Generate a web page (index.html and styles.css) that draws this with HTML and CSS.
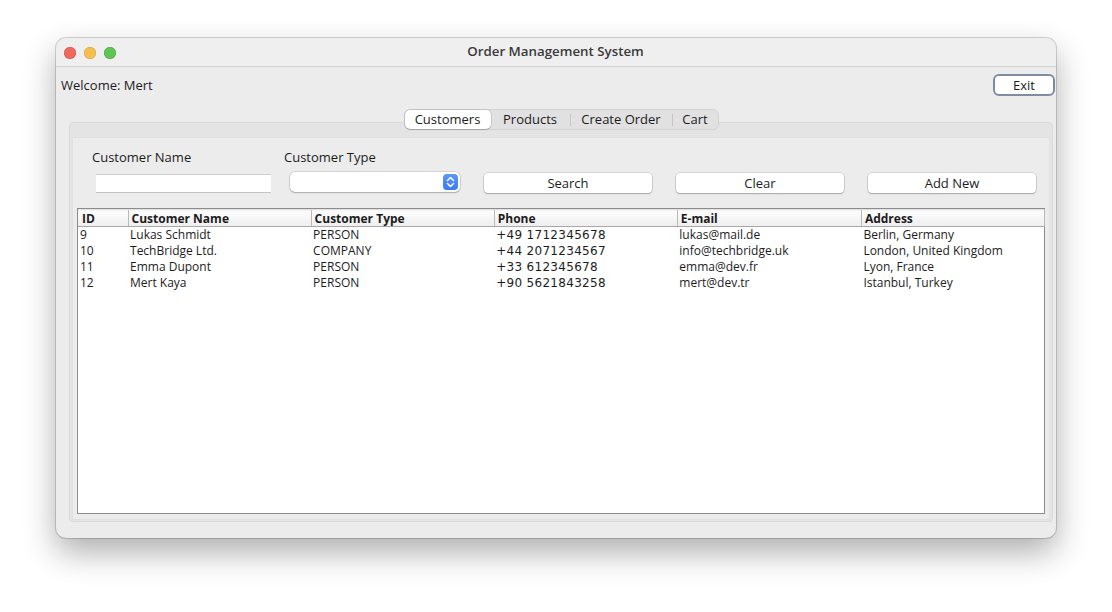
FILE: index.html
```html
<!DOCTYPE html>
<html>
<head>
<meta charset="utf-8">
<link rel="stylesheet" href="styles.css">
</head>
<body>
<div class="desktop">
  <div class="window">
    <div class="titlebar">
      <div class="lights">
        <span class="light red"></span>
        <span class="light yellow"></span>
        <span class="light green"></span>
      </div>
      <div class="title">Order Management System</div>
    </div>
    <div class="topbar">
      <span class="welcome">Welcome: Mert</span>
      <button class="exit">Exit</button>
    </div>
    <div class="tabs-area">
      <div class="tabs">
        <span class="tab active t1">Customers</span>
        <span class="tab t2">Products</span>
        <span class="sep"></span>
        <span class="tab t3">Create Order</span>
        <span class="sep"></span>
        <span class="tab t4">Cart</span>
      </div>
      <div class="panel">
        <div class="inner">
          <div class="form">
            <label class="lbl">Customer Name</label>
            <label class="lbl">Customer Type</label>
            <span></span><span></span><span></span>
            <div class="cell"><input class="field" type="text"></div>
            <div class="cell">
              <div class="combo">
                <span class="combo-btn">
                  <svg width="9" height="12" viewBox="0 0 9 12"><path d="M1.5 4.5 L4.5 1.5 L7.5 4.5 M1.5 7.5 L4.5 10.5 L7.5 7.5" fill="none" stroke="#fff" stroke-width="1.5" stroke-linecap="round" stroke-linejoin="round"/></svg>
                </span>
              </div>
            </div>
            <div class="cell"><button class="btn">Search</button></div>
            <div class="cell"><button class="btn">Clear</button></div>
            <div class="cell"><button class="btn">Add New</button></div>
          </div>
          <div class="table-wrap">
            <table class="grid">
              <colgroup>
                <col class="c-id"><col class="c-w"><col class="c-w"><col class="c-w"><col class="c-w1"><col class="c-w">
              </colgroup>
              <thead>
                <tr><th>ID</th><th>Customer Name</th><th>Customer Type</th><th>Phone</th><th>E-mail</th><th>Address</th></tr>
              </thead>
              <tbody>
                <tr><td>9</td><td>Lukas Schmidt</td><td>PERSON</td><td class="num">+49 1712345678</td><td>lukas@mail.de</td><td>Berlin, Germany</td></tr>
                <tr><td>10</td><td>TechBridge Ltd.</td><td>COMPANY</td><td class="num">+44 2071234567</td><td>info@techbridge.uk</td><td>London, United Kingdom</td></tr>
                <tr><td>11</td><td>Emma Dupont</td><td>PERSON</td><td class="num">+33 612345678</td><td>emma@dev.fr</td><td>Lyon, France</td></tr>
                <tr><td>12</td><td>Mert Kaya</td><td>PERSON</td><td class="num">+90 5621843258</td><td>mert@dev.tr</td><td>Istanbul, Turkey</td></tr>
              </tbody>
            </table>
          </div>
        </div>
      </div>
    </div>
  </div>
</div>
</body>
</html>
```

FILE: styles.css
```css
* { box-sizing: border-box; }
html, body {
  margin: 0;
  padding: 0;
  background: #ffffff;
  font-family: "Open Sans", "DejaVu Sans", sans-serif;
  color: #1c1c1c;
}
.desktop {
  padding: 38px 0 0 56px;
  width: 1112px;
  height: 612px;
}
.window {
  width: 1000px;
  height: 500px;
  background: #ececec;
  border-radius: 10px;
  overflow: hidden;
  box-shadow: 0 0 0 1px rgba(0,0,0,0.16), 0 14px 32px rgba(0,0,0,0.32);
  display: flex;
  flex-direction: column;
}
.titlebar {
  height: 29px;
  flex: none;
  background: #efefef;
  border-bottom: 1px solid #d2d2d2;
  display: flex;
  align-items: center;
  position: relative;
}
.lights {
  display: flex;
  gap: 8px;
  padding-left: 8px;
  padding-top: 1px;
}
.light {
  width: 12px;
  height: 12px;
  border-radius: 50%;
  display: block;
}
.red { background: #ee6a5f; box-shadow: inset 0 0 0 0.5px #d35146; }
.yellow { background: #f5be4f; box-shadow: inset 0 0 0 0.5px #d8a13b; }
.green { background: #5fc454; box-shadow: inset 0 0 0 0.5px #4aa83e; }
.title {
  position: absolute;
  left: 0;
  right: 0;
  top: 4px;
  text-align: center;
  font-size: 13.3px;
  font-weight: 600;
  color: #3a3a3a;
  line-height: 18px;
  padding-right: 1px;
}
.topbar {
  display: flex;
  justify-content: space-between;
  align-items: center;
  padding: 7px 1px 0 5px;
  height: 29px;
  flex: none;
}
.welcome {
  font-size: 13px;
  line-height: 18px;
}
.exit {
  width: 62px;
  height: 22px;
  font-family: inherit;
  font-size: 13px;
  line-height: 16px;
  background: #ffffff;
  border: 2px solid #7f8ca6;
  border-radius: 6px;
  padding: 0;
  color: #1c1c1c;
}
.tabs-area {
  padding: 13px 3px 0 13px;
  display: flex;
  flex-direction: column;
  align-items: center;
}
.tabs {
  position: relative;
  z-index: 1;
  display: flex;
  align-items: center;
  height: 21px;
  background: #e1e1e1;
  border: 1px solid #d3d3d3;
  border-radius: 6px;
  margin-bottom: -8px;
  padding: 0;
}
.tab {
  font-size: 13px;
  line-height: 19px;
  text-align: center;
  color: #1c1c1c;
}
.t1 { width: 86px; }
.t2 { width: 79px; }
.t3 { width: 101px; }
.t4 { width: 45px; }
.tab.active {
  background: #ffffff;
  border-radius: 5px;
  box-shadow: 0 0 0 0.5px rgba(0,0,0,0.18), 0 1px 1px rgba(0,0,0,0.15);
}
.sep {
  width: 1px;
  height: 12px;
  background: #c4c4c4;
}
.panel {
  width: 984px;
  border: 1px solid #d9d9d9;
  border-radius: 4px;
  background: #e4e4e4;
  padding: 14px 2px 1px 2px;
}
.inner {
  background: #ececec;
  border: 1px solid #e0e0e0;
  padding: 11px 3px 5px 4px;
}
.form {
  display: grid;
  grid-template-columns: repeat(5, 192px);
  grid-template-rows: 16px 21px;
  row-gap: 7px;
  padding-left: 15px;
}
.lbl {
  font-size: 13px;
  line-height: 16px;
  color: #1c1c1c;
}
.cell {
  display: flex;
  align-items: center;
}
.field {
  margin-left: 4px;
  margin-top: 1px;
  width: 175px;
  height: 19px;
  border: none;
  border-top: 1px solid #d0d0d0;
  border-bottom: 1px solid #c4c4c4;
  background: #ffffff;
  outline: none;
  padding: 0;
}
.combo {
  margin-left: 6px;
  margin-top: -1px;
  width: 170px;
  height: 20px;
  background: #ffffff;
  border-radius: 5px;
  box-shadow: 0 0 0 0.5px rgba(0,0,0,0.2), 0 1px 1.5px rgba(0,0,0,0.2);
  display: flex;
  justify-content: flex-end;
  align-items: center;
  padding-right: 2px;
}
.combo-btn {
  width: 15px;
  height: 16px;
  border-radius: 4px;
  background: linear-gradient(#5a98f8, #3a7bef);
  display: flex;
  align-items: center;
  justify-content: center;
}
.combo-btn svg { display: block; }
.btn {
  margin-left: 8px;
  margin-top: 1px;
  width: 168px;
  height: 20px;
  background: #ffffff;
  border: none;
  border-radius: 4px;
  box-shadow: 0 0 0 0.5px rgba(0,0,0,0.2), 0 1px 1.5px rgba(0,0,0,0.22);
  font-family: inherit;
  font-size: 13px;
  line-height: 18px;
  color: #1c1c1c;
  padding: 0;
}
.table-wrap {
  margin-top: 15px;
  height: 306px;
  border: 1px solid #8c8c8c;
  background: #ffffff;
  padding-right: 1px;
  margin-right: 1px;
}
.grid {
  width: 967px;
  border-collapse: collapse;
  table-layout: fixed;
  font-size: 12px;
}
.c-id { width: 50px; }
.c-w { width: 183px; }
.c-w1 { width: 184px; }
.grid th {
  height: 17px;
  padding: 0 0 0 3px;
  text-align: left;
  font-weight: 700;
  line-height: 15px;
  background: linear-gradient(#fdfdfd, #eeeeee);
  border-left: 1px solid #b9b9b9;
  border-bottom: 1px solid #a8a8a8;
  border-top: 1px solid #e2e2e2;
  white-space: nowrap;
  overflow: hidden;
}
.grid th:first-child { border-left: none; padding-left: 4px; }
.grid th:last-child { border-right: 1px solid #b9b9b9; }
.grid td {
  height: 16px;
  padding: 0 0 0 2px;
  line-height: 16px;
  white-space: nowrap;
  overflow: hidden;
}
.grid td.num {
  font-family: "DejaVu Sans", "Open Sans", sans-serif;
  font-size: 12px;
  letter-spacing: 0.3px;
}
```
